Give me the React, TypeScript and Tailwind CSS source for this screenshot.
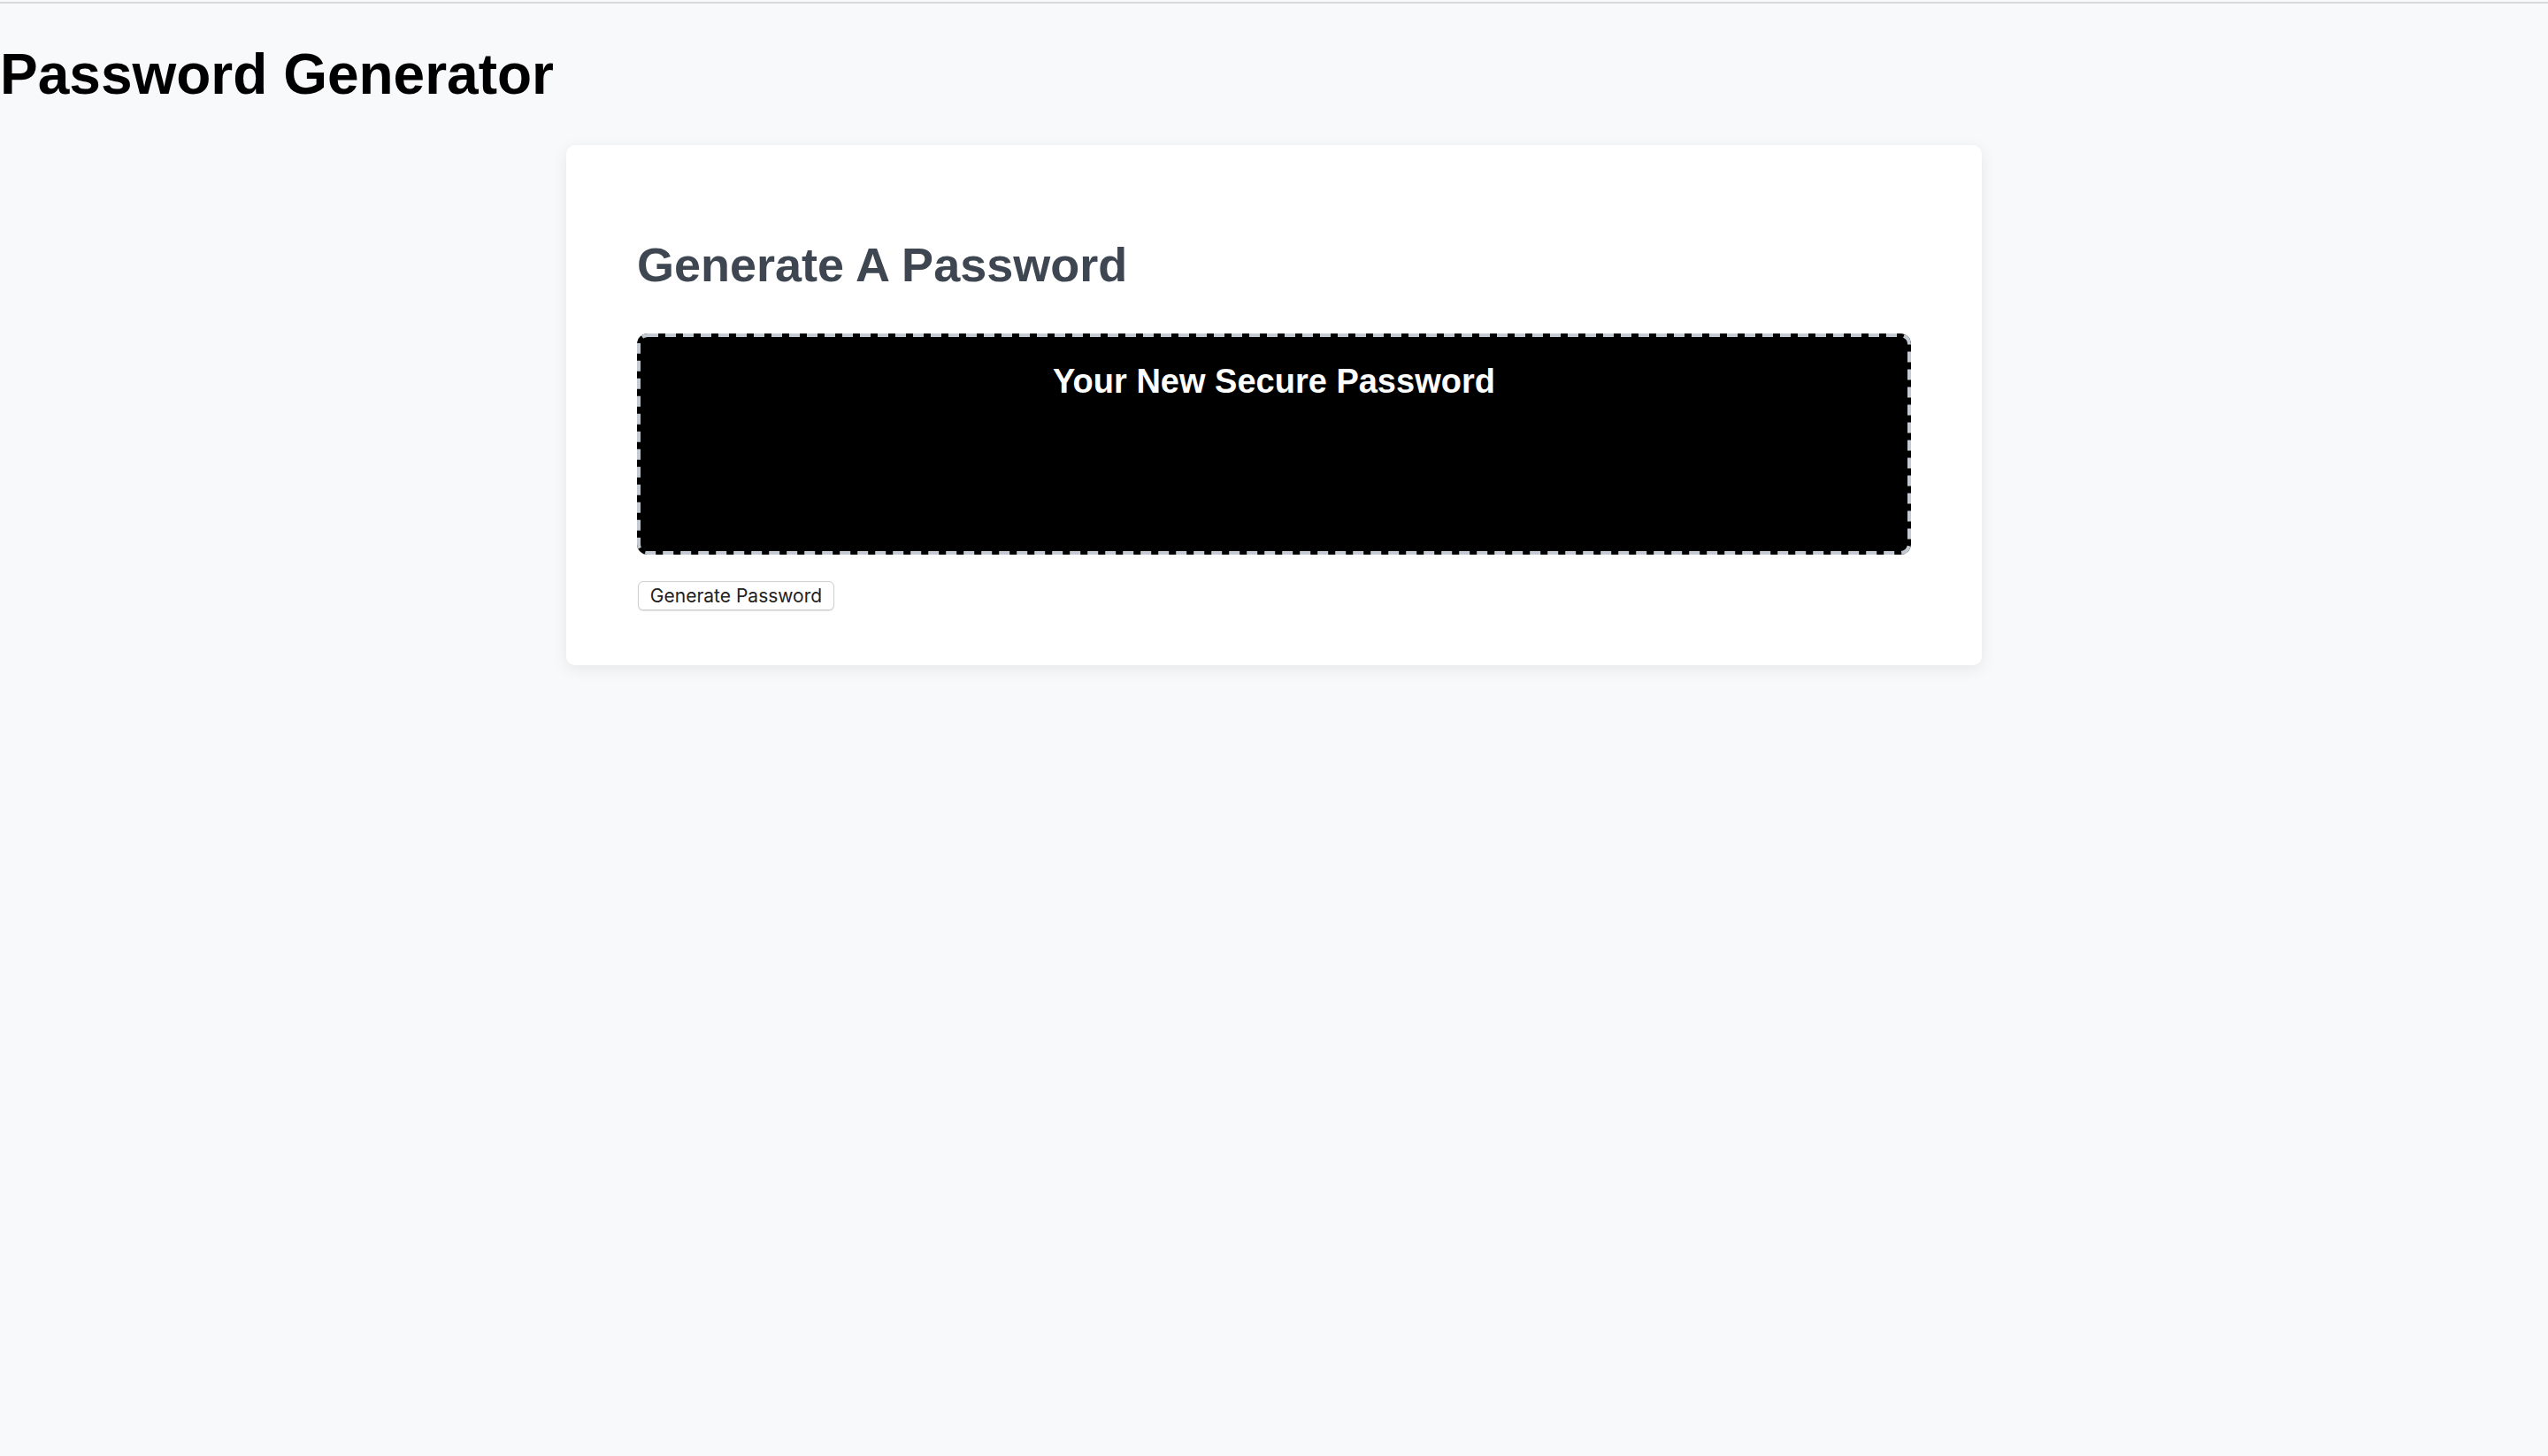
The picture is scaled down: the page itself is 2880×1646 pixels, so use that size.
export default function App() {
  return (
    <div className="min-h-screen bg-[#f8f9fb] pt-[2px] font-['Liberation_Sans',Arial,sans-serif]">
      {/* top rule */}
      <div className="h-[2px] bg-[#d9d9db]" />

      <h1 className="mt-[43px] text-[64px] font-bold leading-[74px] text-black">
        Password Generator
      </h1>

      {/* Card */}
      <div className="mx-auto mt-[43px] w-[1600px] rounded-[10px] bg-white px-[80px] pb-[62px] pt-[104px] shadow-[0_4px_18px_rgba(0,0,0,0.08)]">
        <h2 className="mb-[47px] text-[54px] font-bold leading-[62px] text-[#3e4651]">
          Generate A Password
        </h2>

        {/* Password display */}
        <div className="relative h-[250px] rounded-[12px] bg-black pt-[32px] text-center">
          <svg
            className="pointer-events-none absolute inset-0"
            width="1440"
            height="250"
            viewBox="0 0 1440 250"
          >
            <rect
              x="2"
              y="2"
              width="1436"
              height="246"
              rx="10"
              fill="none"
              stroke="#c4cad1"
              strokeWidth="4"
              strokeDasharray="12 8"
            />
          </svg>
          <h3 className="text-[38px] font-bold leading-[44px] text-white">
            Your New Secure Password
          </h3>
        </div>

        <button
          type="button"
          className="ml-[1px] mt-[30px] flex h-[33px] w-[222px] items-center justify-center rounded-[6px] border border-[#cfcfd1] bg-white font-['Inter',sans-serif] text-[21px] text-[#222] shadow-[0_1px_1px_rgba(0,0,0,0.12)]"
        >
          Generate Password
        </button>
      </div>
    </div>
  )
}
